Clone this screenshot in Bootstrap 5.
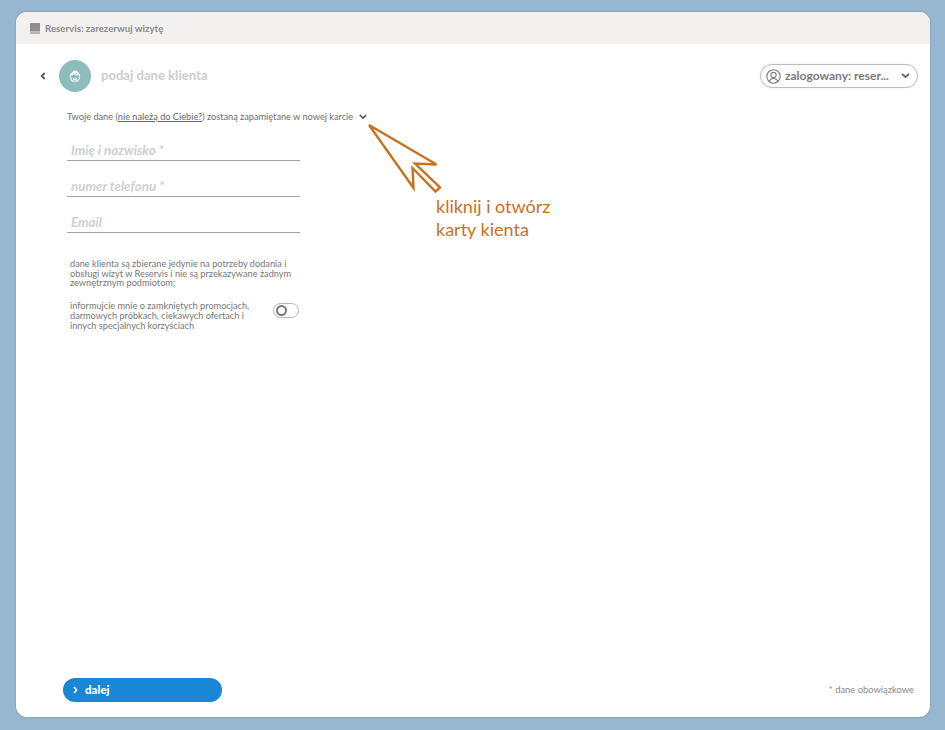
<!DOCTYPE html>
<html lang="pl">
<head>
<meta charset="utf-8">
<title>Reservis</title>
<link href="https://cdn.jsdelivr.net/npm/bootstrap@5.3.0/dist/css/bootstrap.min.css" rel="stylesheet">
<style>
html,body{height:730px;overflow:hidden}
body{background:#97b6cf;padding:12px 15px 13px 16px;font-family:Lato,"Liberation Sans",sans-serif;color:#666}
.shell{height:705px;background:#fff;border-radius:11px;overflow:hidden;position:relative;box-shadow:0 0 2px #6d8496}
.topbar{height:32px;background:#f2f1f0;padding-left:14px;gap:5px;font-size:9.7px;font-weight:700;color:#8b8b8b}
.main-area{padding:16px 12px 0 24px}
.back{width:19px}
.step-circle{width:32px;height:32px;border-radius:50%;background:#8dbcbc}
.step-title{font-size:13px;font-weight:900;color:#d0d0d0;margin-left:10px}
.user-pill{width:158px;height:24px;border:1px solid #bdbdbd;border-radius:12px;padding:0 7px 0 5px;font-size:12px;font-weight:700;color:#7a7a7a;box-shadow:0 0 1px #ccc}
.pill-label{margin-left:4px}
.form-area{margin:19px 0 0 27px;width:233px}
.notice{font-size:9.2px;line-height:12px;white-space:nowrap;color:#6d6d6d}
.notice u{color:#666}
.notice-chevron{margin-left:6px}
.field{height:36px;border-bottom:1px solid #a3a3a3;padding:0 0 1px 4px;font-size:13.3px;line-height:1.2;font-weight:700;font-style:italic;color:#cfcfcf}
.field-first{height:38px}
.fine{font-size:9.2px;line-height:9.7px;color:#777;margin-left:3px;white-space:nowrap}
.fine-top{margin-top:26px}
.consent{margin-top:13px}
.switch{width:26px;height:15px;border:1px solid #b5b5b5;border-radius:8px;padding:1px;margin:2px 1px 0 0}
.knob{width:11px;height:11px;border:2px solid #777;border-radius:50%;margin-left:1px}
.bottom{left:47px;right:16px;bottom:15px}
.next-btn{width:159px;height:24px;background:#1a86d6;border-radius:12px;padding:0 0 0 10px;gap:7px;font-size:11.5px;font-weight:900;color:#fff}
.next-btn:hover{background:#1a86d6;color:#fff}
.req{font-size:9.4px;color:#8a8a8a}
.arrow{left:349px;top:110px}
.hint{left:420px;top:183px;font-size:18px;line-height:23px;color:#c8711f}
</style>
</head>
<body>
<div class="shell d-flex flex-column">
  <div class="topbar d-flex align-items-center">
    <svg width="10" height="11" viewBox="0 0 10 11"><path fill="#8f8f8f" d="M0 1.200C0 .5.500 0 1.200 0H10v8.400H1.400C.9 8.400.5 8.700.3 9H0z"/><path fill="#b5b5b5" d="M0 9.400c.3-.5.8-.6 1.400-.6H10V11H1.200C.5 11 0 10.400 0 9.400z"/></svg>
    <span>Reservis: zarezerwuj wizytę</span>
  </div>
  <div class="main-area flex-grow-1">
    <div class="d-flex align-items-center justify-content-between">
      <div class="d-flex align-items-center">
        <div class="back d-flex">
          <svg width="6" height="8" viewBox="0 0 6 8"><path d="M4.700 1 1.700 4l3 3" fill="none" stroke="#555" stroke-width="1.800"/></svg>
        </div>
        <div class="step-circle d-flex align-items-center justify-content-center">
          <svg width="12" height="13" viewBox="0 0 12 13" fill="none" stroke="#fff" stroke-width="1.200"><circle cx="6" cy="6.800" r="4.600"/><path d="M2.400 4.600C3.600 2.200 5 1 6.200 1c1.800 0 3 1.600 3.600 3.500C8 5 6.500 4.600 5.500 3.500 4.800 4.400 3.800 4.800 2.400 4.600z"/><path d="M4 8.500c1.200 1 2.800 1 4 0"/></svg>
        </div>
        <span class="step-title">podaj dane klienta</span>
      </div>
      <div class="user-pill d-flex align-items-center">
        <svg class="flex-shrink-0" width="15" height="15" viewBox="0 0 15 15" fill="none" stroke="#808080" stroke-width="1.100"><circle cx="7.500" cy="7.500" r="6.700"/><circle cx="7.500" cy="6" r="2.600"/><path d="M3 12.500c.8-2 2.500-3 4.500-3s3.700 1 4.500 3"/></svg>
        <span class="pill-label flex-grow-1 text-nowrap">zalogowany: reser...</span>
        <svg class="flex-shrink-0" width="9" height="6" viewBox="0 0 9 6"><path d="M1 1l3.500 3L8 1" fill="none" stroke="#666" stroke-width="1.800"/></svg>
      </div>
    </div>
    <div class="form-area">
      <div class="notice d-flex align-items-center">
        <span>Twoje dane (<u>nie należą do Ciebie?</u>) zostaną zapamiętane w nowej karcie</span>
        <svg class="notice-chevron flex-shrink-0" width="8" height="6" viewBox="0 0 8 6"><path d="M.8 1 4 4l3.200-3" fill="none" stroke="#555" stroke-width="1.700"/></svg>
      </div>
      <div class="field field-first d-flex align-items-end">Imię i nazwisko *</div>
      <div class="field d-flex align-items-end">numer telefonu *</div>
      <div class="field d-flex align-items-end">Email</div>
      <p class="fine fine-top mb-0">dane klienta są zbierane jedynie na potrzeby dodania i<br>obsługi wizyt w Reservis i nie są przekazywane żadnym<br>zewnętrznym podmiotom;</p>
      <div class="consent d-flex justify-content-between align-items-start">
        <p class="fine mb-0">informujcie mnie o zamkniętych promocjach,<br>darmowych próbkach, ciekawych ofertach i<br>innych specjalnych korzyściach</p>
        <div class="switch d-flex align-items-center"><div class="knob"></div></div>
      </div>
    </div>
  </div>
  <div class="bottom position-absolute d-flex justify-content-between align-items-center">
    <button type="button" class="btn next-btn d-flex align-items-center border-0">
      <svg width="5" height="8" viewBox="0 0 5 8"><path d="M1 1l2.700 3L1 7" fill="none" stroke="#fff" stroke-width="1.500"/></svg>
      <span>dalej</span>
    </button>
    <span class="req">* dane obowiązkowe</span>
  </div>
  <svg class="arrow position-absolute" width="78" height="72" viewBox="0 0 78 72"><path d="M4 3 71.500 42.500 50 41.500 75 65.500 70.500 69.500 47.500 46 48.500 66z" fill="#fff" stroke="#c8711f" stroke-width="2.400" stroke-linejoin="miter"/></svg>
  <div class="hint position-absolute">kliknij i otwórz<br>karty kienta</div>
</div>
</body>
</html>
